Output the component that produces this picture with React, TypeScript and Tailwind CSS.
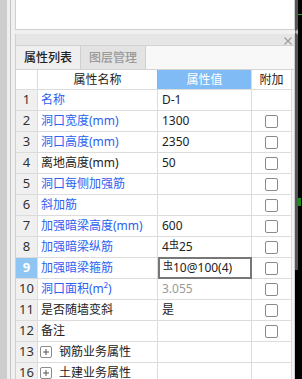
import React from "react";

type Row = {
  n: string;
  name: string;
  blue?: boolean;
  value?: React.ReactNode;
  gray?: boolean;
  cb?: boolean;
  sel?: boolean;
  group?: boolean;
};

const Rebar = () => (
  <span className="relative top-[-3px] text-[10px] leading-none">虫</span>
);

const rows: Row[] = [
  { n: "1", name: "名称", blue: true, value: "D-1" },
  { n: "2", name: "洞口宽度(mm)", blue: true, value: "1300", cb: true },
  { n: "3", name: "洞口高度(mm)", blue: true, value: "2350", cb: true },
  { n: "4", name: "离地高度(mm)", value: "50", cb: true },
  { n: "5", name: "洞口每侧加强筋", blue: true, cb: true },
  { n: "6", name: "斜加筋", blue: true, cb: true },
  { n: "7", name: "加强暗梁高度(mm)", blue: true, value: "600", cb: true },
  {
    n: "8",
    name: "加强暗梁纵筋",
    blue: true,
    value: (
      <>
        4<Rebar />25
      </>
    ),
    cb: true,
  },
  {
    n: "9",
    name: "加强暗梁箍筋",
    blue: true,
    value: (
      <>
        <Rebar />10@100(4)
      </>
    ),
    cb: true,
    sel: true,
  },
  { n: "10", name: "洞口面积(m²)", blue: true, value: "3.055", gray: true, cb: true },
  { n: "11", name: "是否随墙变斜", value: "是", cb: true },
  { n: "12", name: "备注", cb: true },
  { n: "13", name: "钢筋业务属性", group: true },
  { n: "16", name: "土建业务属性", group: true },
];

const Checkbox = () => (
  <div className="w-[13px] h-[13px] rounded-[2px] border border-[#8a8a8a] bg-white" />
);

export default function App() {
  return (
    <div className="flex w-[302px] h-[379px] overflow-hidden bg-[#f0f0f0] font-['Noto_Sans','Noto_Sans_CJK_SC',sans-serif] text-[12px] text-[#222]">
      {/* left chrome */}
      <div className="w-[7px] shrink-0 bg-[#cdcdcd]" />
      <div className="w-[3px] shrink-0 bg-[#efefef]" />
      <div className="w-[1px] shrink-0 bg-[#c4c4c4]" />
      <div className="w-[4px] shrink-0 bg-[#f0f0f0]" />

      {/* main */}
      <div className="w-[280px] shrink-0 flex flex-col">
        <div className="h-[30px] shrink-0 bg-white border-l border-r border-b border-[#cfcfcf]" />
        <div className="h-[4px] shrink-0" />
        <div className="flex-1 shrink-0 flex flex-col border-l border-r border-[#cfcfcf] bg-white">
          {/* panel header */}
          <div className="h-[12px] shrink-0 bg-[#e6e6e6] border-b border-[#d2d2d2] flex items-center justify-end pr-[2px]">
            <svg width="8" height="8" viewBox="0 0 8 8" className="mt-[3px]">
              <path d="M0.5 0.5 L7.5 7.5 M7.5 0.5 L0.5 7.5" stroke="#9a9a9a" strokeWidth="1.1" />
            </svg>
          </div>
          {/* tabs */}
          <div className="h-[24px] shrink-0 flex border-b border-[#d4d4d4] bg-[#f8f8f8]">
            <div className="w-[65px] flex items-center justify-center bg-[#efefef] border-r border-[#cfcfcf] text-[#222] font-medium">
              属性列表
            </div>
            <div className="w-[65px] flex items-center justify-center bg-[#e3e3e3] border-r border-[#cfcfcf] text-[#9a9a9a] font-medium">
              图层管理
            </div>
            <div className="flex-1" />
          </div>
          {/* table */}
          <div className="flex shrink-0">
            <div className="w-[276px] flex flex-col">
              {/* header */}
              <div className="flex h-[20px] shrink-0 border-b border-[#dcdcdc]">
                <div className="w-[22px] border-r border-[#dcdcdc] bg-white" />
                <div className="w-[120px] border-r border-[#7fb4ec] flex items-center justify-center text-[#222]">
                  属性名称
                </div>
                <div className="w-[94px] border-r border-[#dcdcdc] bg-[#80bbf6] flex items-center justify-center text-white">
                  属性值
                </div>
                <div className="w-[40px] border-r border-[#dcdcdc] flex items-center justify-center text-[#222]">
                  附加
                </div>
              </div>
              {rows.map((r) => (
                <div key={r.n} className="flex h-[21px] shrink-0 border-b border-[#dcdcdc]">
                  <div
                    className={
                      r.sel
                        ? "w-[22px] border-r border-[#dcdcdc] bg-[#8fc5f3] text-white font-bold flex items-center justify-center text-[13px]"
                        : "w-[22px] border-r border-[#dcdcdc] bg-[#f0f0f0] text-[#333] flex items-center justify-center text-[13px]"
                    }
                  >
                    {r.n}
                  </div>
                  <div
                    className={
                      r.group
                        ? "w-[120px] border-r border-[#dcdcdc] flex items-center pl-[2px] text-[#222]"
                        : r.blue
                        ? "w-[120px] border-r border-[#dcdcdc] flex items-center pl-[3px] text-[#2d5ff0]"
                        : "w-[120px] border-r border-[#dcdcdc] flex items-center pl-[3px] text-[#222]"
                    }
                  >
                    {r.group && (
                      <div className="w-[12px] h-[12px] mr-[7px] rounded-[2px] border border-[#8a8a8a] flex items-center justify-center">
                        <svg width="8" height="8" viewBox="0 0 8 8">
                          <path d="M4 1 V7 M1 4 H7" stroke="#555" strokeWidth="1" />
                        </svg>
                      </div>
                    )}
                    <span className="whitespace-nowrap">{r.name}</span>
                  </div>
                  <div
                    className={
                      r.sel
                        ? "w-[94px] border-2 border-[#777] -mt-[1px] h-[22px] flex items-center pl-[3px] whitespace-nowrap text-[#222]"
                        : r.gray
                        ? "w-[94px] border-r border-[#dcdcdc] flex items-center pl-[4px] whitespace-nowrap text-[#999]"
                        : "w-[94px] border-r border-[#dcdcdc] flex items-center pl-[4px] whitespace-nowrap text-[#222]"
                    }
                  >
                    {r.value}
                  </div>
                  <div className="w-[40px] border-r border-[#dcdcdc] flex items-center justify-center">
                    {r.cb && <Checkbox />}
                  </div>
                </div>
              ))}
            </div>
            <div className="w-[2px] bg-[#f4f4f4]" />
          </div>
        </div>
      </div>

      {/* right chrome */}
      <div className="w-[7px] shrink-0 flex relative bg-black">
        <div className="w-[3px] flex flex-col">
          <div className="h-[270px] shrink-0 bg-[#555]" />
          <div className="flex-1 bg-black" />
        </div>
        <div className="w-[4px] flex flex-col">
          <div className="h-[14px] shrink-0" />
          <div className="h-[1px] shrink-0 bg-[#1fa31f]" />
          <div className="h-[183px] shrink-0" />
          <div className="h-[8px] w-[3px] shrink-0 bg-[#1a8a1a]" />
        </div>
        <div className="absolute left-[0px] top-[29px] w-0 h-0 border-t-[3px] border-b-[3px] border-r-[3px] border-t-transparent border-b-transparent border-r-[#bbbbbb]" />
      </div>
    </div>
  );
}
